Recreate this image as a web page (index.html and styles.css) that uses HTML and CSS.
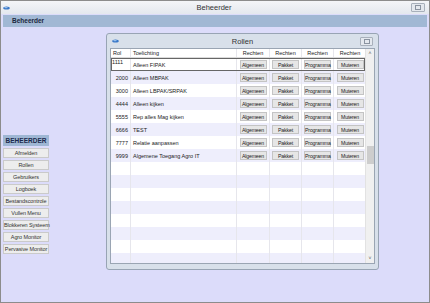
FILE: index.html
```html
<!DOCTYPE html>
<html lang="nl">

<head>
    <meta charset="UTF-8" />
    <title>Beheerder</title>
    <link rel="stylesheet" href="styles.css">
</head>

<body>
    <div class="app">
        <div class="titlebar">
            <svg class="win-icon" width="7" height="4" viewBox="0 0 7 4"><ellipse cx="3.5" cy="2" rx="3.3" ry="1.6" fill="#3a78c8" /><ellipse cx="3" cy="1.6" rx="1.8" ry="0.6" fill="#9cc4f0" /></svg>
            <span class="title">Beheerder</span>
            <span class="close-btn"><span></span></span>
        </div>
        <div class="section-bar">Beheerder</div>

        <div class="workspace">
            <div class="menu">
                <div class="menu-head">BEHEERDER</div>
                <button class="menu-btn">Afmelden</button>
                <button class="menu-btn">Rollen</button>
                <button class="menu-btn">Gebruikers</button>
                <button class="menu-btn">Logboek</button>
                <button class="menu-btn">Bestandscontrole</button>
                <button class="menu-btn">Vullen Menu</button>
                <button class="menu-btn">Blokkeren Systeem</button>
                <button class="menu-btn">Agro Monitor</button>
                <button class="menu-btn">Pervasive Monitor</button>
            </div>

            <div class="window">
                <div class="win-title">
                    <svg class="win-icon" width="7" height="4" viewBox="0 0 7 4"><ellipse cx="3.5" cy="2" rx="3.3" ry="1.6" fill="#3a78c8" /><ellipse cx="3" cy="1.6" rx="1.8" ry="0.6" fill="#9cc4f0" /></svg>
                    <span class="title">Rollen</span>
                    <span class="close-btn"><span></span></span>
                </div>
                <div class="grid-box">
                    <div class="grid">
                        <div class="row head">
                            <div class="cell left">Rol</div>
                            <div class="cell left">Toelichting</div>
                            <div class="cell">Rechten</div>
                            <div class="cell">Rechten</div>
                            <div class="cell">Rechten</div>
                            <div class="cell">Rechten</div>
                        </div>
                        <div id="rows"></div>
                    </div>
                    <div class="scrollbar">
                        <span class="arrow">&#708;</span>
                        <span class="thumb"></span>
                        <span class="arrow">&#709;</span>
                    </div>
                </div>
            </div>
        </div>
    </div>

    <script>
        const roles = [
            ['1111', 'Alleen FIPAK'],
            ['2000', 'Alleen MBPAK'],
            ['3000', 'Alleen LBPAK/SRPAK'],
            ['4444', 'Alleen kijken'],
            ['5555', 'Rep alles Mag kijken'],
            ['6666', 'TEST'],
            ['7777', 'Relatie aanpassen'],
            ['9999', 'Algemene Toegang Agro IT']
        ];
        const rows = document.getElementById('rows');

        roles.forEach(function (r, i) {
            const row = document.createElement('div');
            row.className = 'row' + (i === 0 ? ' selected' : '');
            row.innerHTML = `
                <div class="cell num">${r[0]}</div>
                <div class="cell left">${r[1]}</div>
                <div class="cell"><button class="btn">Algemeen</button></div>
                <div class="cell"><button class="btn">Pakket</button></div>
                <div class="cell"><button class="btn">Programma</button></div>
                <div class="cell"><button class="btn">Muteren</button></div>
            `;
            rows.appendChild(row);
        });

        for (let i = 0; i < 8; i++) {
            const row = document.createElement('div');
            row.className = 'row';
            row.innerHTML = '<div class="cell"></div>'.repeat(6);
            rows.appendChild(row);
        }
    </script>
</body>

</html>
```

FILE: styles.css
```css
body {
    margin: 0;
    font-family: 'Liberation Sans', Arial, sans-serif;
    color: #222;
}

.app {
    width: 430px;
    height: 303px;
    box-sizing: border-box;
    border: 1px solid #8c8c8c;
    background: #dcdcfa;
    display: flex;
    flex-direction: column;
    overflow: hidden;
}

.titlebar {
    height: 13px;
    display: grid;
    grid-template-columns: 1fr auto 1fr;
    align-items: center;
    padding: 0 4px 0 2px;
    background: linear-gradient(#f4f5f8, #e4e8ee);
    font-size: 7.5px;
    color: #333;
}

.titlebar .close-btn {
    justify-self: end;
}

.close-btn {
    width: 12px;
    height: 7px;
    border: 1px solid #a8b0bb;
    border-radius: 1px;
    background: #e4e8ee;
    display: flex;
    align-items: center;
    justify-content: center;
}

.close-btn span {
    width: 4px;
    height: 3px;
    border: 1px solid #8a93a0;
}

.section-bar {
    margin: 1px 2px 0;
    height: 12px;
    line-height: 12px;
    background: #a1b8d4;
    font-size: 6.5px;
    font-weight: bold;
    padding-left: 9px;
    color: #1c2840;
}

.workspace {
    display: flex;
    align-items: flex-start;
    padding: 6px 0 0 2px;
}

/* linker menu */
.menu {
    width: 46px;
    margin-top: 102px;
    display: flex;
    flex-direction: column;
    gap: 2px;
}

.menu-head {
    height: 11px;
    line-height: 11px;
    background: #9fb7d4;
    text-align: center;
    font-size: 6.5px;
    font-weight: bold;
    color: #1c2a4c;
}

.menu-btn {
    height: 10px;
    padding: 0;
    margin: 0;
    border: 1px solid #cacaca;
    background: #ededed;
    font-family: inherit;
    font-size: 5.5px;
    color: #333;
    white-space: nowrap;
    letter-spacing: -0.1px;
}

/* Rollen venster */
.window {
    width: 273px;
    height: 237px;
    box-sizing: border-box;
    margin-left: 57px;
    border: 1px solid #98a4b4;
    border-radius: 3px;
    background: #d8e0ea;
    padding: 0 3px 5px 3px;
    display: flex;
    flex-direction: column;
}

.win-title {
    height: 14px;
    display: grid;
    grid-template-columns: 1fr auto 1fr;
    align-items: center;
    padding: 0 2px 0 2px;
    font-size: 7.5px;
    color: #333;
}

.win-title .close-btn {
    justify-self: end;
    width: 11px;
}

.grid-box {
    flex: 1;
    display: flex;
    border: 1px solid #9aa5b3;
    background: #fff;
    overflow: hidden;
}

.grid {
    flex: 1;
    overflow: hidden;
}

.row {
    display: grid;
    grid-template-columns: 20px 106px 33px 32px 32px 33px;
    height: 13px;
    font-size: 5.5px;
}

.row:nth-child(even) {
    background: #eeeefc;
}

.row.head {
    height: 8px;
    background: #fff;
    border-bottom: 1px solid #dadada;
}

.cell {
    border-right: 1px solid #e6e6ec;
    display: flex;
    align-items: center;
    justify-content: center;
    white-space: nowrap;
    overflow: hidden;
}

.cell.left {
    justify-content: flex-start;
    padding-left: 2px;
}

.cell.num {
    justify-content: flex-end;
    padding-right: 2px;
}

.row.selected {
    outline: 1px solid #666;
    outline-offset: -1px;
}

.row.selected .num {
    justify-content: flex-start;
    padding-left: 1px;
    align-items: flex-start;
    padding-top: 1px;
}

.btn {
    width: 27px;
    height: 9px;
    padding: 0;
    border: 1px solid #c4c4c4;
    background: #e6e6e6;
    font-family: inherit;
    font-size: 5.2px;
    letter-spacing: -0.15px;
    color: #222;
    overflow: visible;
    white-space: nowrap;
}

.scrollbar {
    width: 8px;
    background: #f0f0f0;
    border-left: 1px solid #e2e2e2;
    display: flex;
    flex-direction: column;
    align-items: center;
    font-size: 5px;
    color: #555;
}

.scrollbar .arrow {
    height: 9px;
    line-height: 9px;
}

.thumb {
    width: 7px;
    height: 18px;
    margin-top: 88px;
    margin-bottom: auto;
    background: #cdcdcd;
}
```
